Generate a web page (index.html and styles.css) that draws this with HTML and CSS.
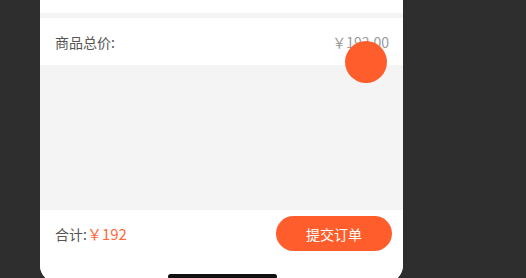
FILE: index.html
```html
<!DOCTYPE html>
<html lang="zh">
<head>
<meta charset="utf-8">
<link rel="stylesheet" href="styles.css">
</head>
<body>
<div class="phone">
  <div class="top-card"></div>
  <div class="gap"></div>
  <div class="row">
    <span class="row-label">商品总价:</span>
    <span class="row-value">￥192.00</span>
  </div>
  <div class="filler"></div>
  <div class="bottom-bar">
    <div class="total"><span class="total-label">合计:</span><span class="total-value">￥192</span></div>
    <button class="submit">提交订单</button>
  </div>
  <div class="fab"></div>
  <div class="home-indicator"></div>
</div>
</body>
</html>
```

FILE: styles.css
```css
html, body {
  margin: 0;
  padding: 0;
  width: 526px;
  height: 278px;
  overflow: hidden;
  background: #2e2e2e;
  font-family: "Noto Sans CJK SC", "Noto Sans", sans-serif;
}
.phone {
  position: relative;
  margin-left: 40px;
  width: 363px;
  height: 283px;
  background: #f4f4f4;
  border-radius: 0 0 18px 18px;
  overflow: hidden;
  display: flex;
  flex-direction: column;
}
.top-card {
  height: 13px;
  background: #fff;
}
.gap {
  height: 5px;
}
.row {
  height: 47px;
  background: #fff;
  display: flex;
  align-items: center;
  justify-content: space-between;
  padding: 0 14px 0 15px;
  box-sizing: border-box;
}
.row-label {
  font-size: 14px;
  color: #555;
}
.row-value {
  font-size: 14px;
  color: #999;
}
.filler {
  flex: 1;
}
.bottom-bar {
  height: 73px;
  background: #fff;
  display: flex;
  justify-content: space-between;
  align-items: flex-start;
  padding: 6px 11px 0 15px;
  box-sizing: border-box;
}
.total {
  height: 35px;
  display: flex;
  align-items: center;
}
.total-label {
  font-size: 14px;
  color: #555;
}
.total-value {
  font-size: 15px;
  color: #ff6a3d;
}
.submit {
  width: 116px;
  height: 35px;
  border: none;
  border-radius: 18px;
  background: #ff5e2c;
  color: #fff;
  font-family: "Noto Sans CJK SC", sans-serif;
  font-size: 14px;
  padding: 0;
}
.fab {
  position: absolute;
  left: 305px;
  top: 41px;
  width: 42px;
  height: 42px;
  border-radius: 50%;
  background: #ff5e2c;
}
.home-indicator {
  position: absolute;
  left: 128px;
  bottom: 4px;
  width: 109px;
  height: 5px;
  border-radius: 3px;
  background: #111;
}
```
